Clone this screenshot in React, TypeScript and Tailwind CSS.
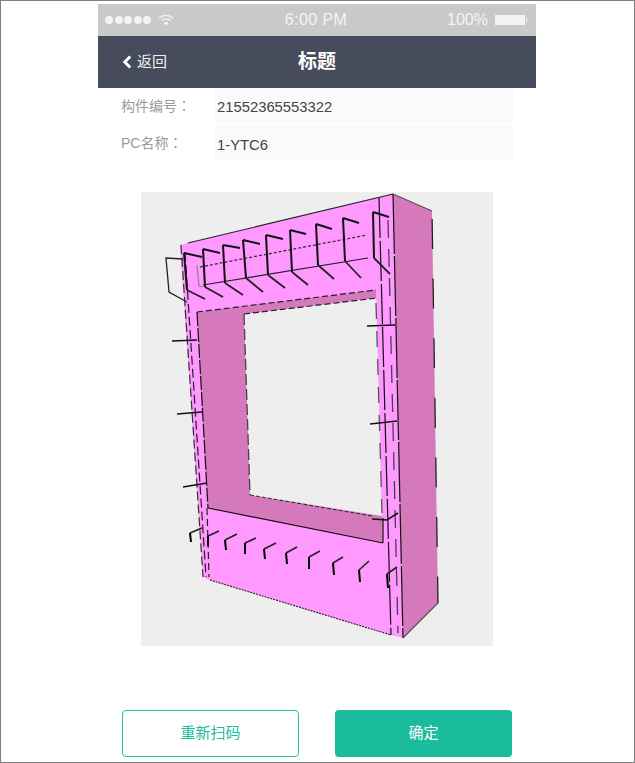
import React from "react";

const CJK = "font-['Liberation_Sans','Noto_Sans_CJK_SC',sans-serif]";

type Pt = [number, number];
const pl = (p: Pt[]) => p.map((q) => q.join(",")).join(" ");

// [tip, corner, bottom, foot]
const topHooks: Pt[][] = [
  [[202, 257], [184, 253], [187, 290], [205, 299]],
  [[220, 253], [203, 249], [205, 287], [223, 297]],
  [[240, 248], [223, 245], [225, 283], [243, 295]],
  [[260, 244], [243, 240], [246, 278], [263, 292]],
  [[283, 239], [266, 235], [268, 275], [285, 288]],
  [[306, 234], [290, 230], [292, 272], [308, 285]],
  [[332, 229], [316, 224], [318, 265], [334, 279]],
  [[359, 223], [343, 218], [345, 261], [361, 278]],
  [[389, 217], [373, 212], [374, 258], [390, 274]],
];

const smallHooks: Pt[][] = [
  [[219, 531], [208, 536], [208, 546]],
  [[237, 534], [225, 540], [226, 550]],
  [[256, 538], [245, 543], [245, 554]],
  [[276, 543], [264, 549], [265, 559]],
  [[297, 547], [286, 553], [287, 564]],
  [[320, 551], [309, 557], [309, 569]],
  [[343, 557], [333, 563], [334, 575]],
  [[369, 561], [359, 570], [360, 582]],
  [[397, 567], [387, 574], [388, 588]],
  [[202, 528], [190, 533], [191, 542]],
];

const stubs: Pt[][] = [
  [[172, 341], [197, 340]],
  [[177, 414], [202, 412]],
  [[183, 487], [207, 483]],
  [[367, 326], [395, 325]],
  [[370, 424], [397, 421]],
  [[372, 519], [387, 520], [398, 513]],
];

const PanelDrawing = () => (
  <svg viewBox="141 192 352 454" className="block h-[454px] w-[352px]" fill="none" strokeLinecap="butt">
    <polygon points="393,194 432,211 438,603 403,638" fill="#d678bc" />
    <polygon points="180,245 188,243 393,194 403,638 391,635 210,580 203,577" fill="#ff99ff" />
    <polygon points="197,312 376,290 383,543 208,508" fill="#d678bc" />
    <polygon points="244,314 377,298 382,516 250,495" fill="#eeeeee" />
    <polygon points="376,290 379,290 383,518 382,516" fill="#ff99ff" />

    {/* top beam */}
    <polyline points="188,243 393,194" stroke="#222" strokeWidth="1.2" />
    <polyline points="393,194 432,211" stroke="#555" strokeWidth="1.2" />
    <polyline points="203,285 368,258" stroke="#222" strokeWidth="1.1" />
    <polyline points="200,267 367,235" stroke="#333" strokeWidth="1.3" strokeDasharray="3 2" />
    <polyline points="197,265 199,286 203,287" stroke="#888" strokeWidth="1.2" />
    <polyline points="197,312 376,290" stroke="#222" strokeWidth="1.2" strokeDasharray="6 3" />
    <polyline points="244,314 377,298" stroke="#222" strokeWidth="1.2" strokeDasharray="6 3" />

    {/* left pillar */}
    <polyline points="181,245 203,577" stroke="#333" strokeWidth="1.2" strokeDasharray="9 4" />
    <polyline points="185,252 206,577" stroke="#222" strokeWidth="1.2" strokeDasharray="9 4" />
    <polyline points="197,312 208,508" stroke="#111" strokeWidth="1.2" strokeDasharray="14 2" />
    <polyline points="207,508 209,577" stroke="#222" strokeWidth="1.2" strokeDasharray="7 4" />
    <polyline points="244,314 250,495" stroke="#444" strokeWidth="1.3" strokeDasharray="11 4" />

    {/* hole bottom */}
    <polyline points="250,495 372,516" stroke="#333" strokeWidth="1.1" strokeDasharray="4 2" />
    <polyline points="208,508 383,543" stroke="#111" strokeWidth="1.2" />
    <polyline points="383,518 383,543" stroke="#111" strokeWidth="1.2" />
    <polyline points="210,580 391,635" stroke="#222" strokeWidth="1.1" strokeDasharray="2 1" />

    {/* right pillar */}
    <polyline points="379,198 391,635" stroke="#111" strokeWidth="1.2" strokeDasharray="40 3" />
    <polyline points="388,220 398,633" stroke="#444" strokeWidth="1.3" strokeDasharray="18 11" />
    <polyline points="393,194 403,638" stroke="#111" strokeWidth="1.2" strokeDasharray="60 2" />
    <polyline points="376,303 382,513" stroke="#555" strokeWidth="1.3" strokeDasharray="16 12" />
    <polyline points="432,211 438,603" stroke="#222" strokeWidth="1.3" strokeDasharray="30 29.6" strokeDashoffset="51.6" />
    <polyline points="403,638 438,603" stroke="#555" strokeWidth="1.1" />

    {/* far-left hook */}
    <polyline points="183,259 166,258 169,292 187,302" stroke="#222" strokeWidth="1.3" />

    {topHooks.map((h, i) => (
      <g key={i}>
        <polyline points={pl(h.slice(0, 2))} stroke="#111" strokeWidth="1.9" />
        <polyline points={pl(h.slice(1, 3))} stroke="#111" strokeWidth="2" />
        <polyline points={pl(h.slice(2))} stroke="#222" strokeWidth="1.8" />
      </g>
    ))}
    {smallHooks.map((h, i) => (
      <g key={i}>
        <polyline points={pl(h.slice(0, 2))} stroke="#222" strokeWidth="1.6" />
        <polyline points={pl(h.slice(1))} stroke="#000" strokeWidth="2" />
      </g>
    ))}
    {stubs.map((h, i) => (
      <polyline key={i} points={pl(h)} stroke="#111" strokeWidth="1.5" />
    ))}
  </svg>
);

const Row = ({ label, value, shift }: { label: string; value: string; shift: string }) => (
  <div className="flex h-[35px] pl-[23px] pr-[23px]">
    <div className={`w-[94px] text-[14px] leading-[34px] text-[#9a9a9a] ${CJK}`}>
      {label}
      <span className="font-['Noto_Sans_CJK_TC',sans-serif]">：</span>
    </div>
    <div className={`h-[35px] flex-1 bg-[#fafafa] pl-[2px] font-['Liberation_Sans',sans-serif] text-[14.8px] text-[#444444] ${shift}`}>
      {value}
    </div>
  </div>
);

export default function App() {
  return (
    <div className="h-[763px] w-[635px] border border-[#808080] bg-white">
      <div className="ml-[97px] w-[438px] pt-[3px]">
        {/* status bar */}
        <div className="flex h-[32px] items-center justify-between bg-[#c9c9c9] pl-[7px] pr-[9px] font-['Liberation_Sans',sans-serif] text-[16px] text-[#f4f4f4]">
          <div className="flex w-[130px] items-center gap-[1.5px]">
            {[0, 1, 2, 3, 4].map((i) => (
              <span key={i} className="h-[8px] w-[8px] rounded-full bg-[#f4f4f4]" />
            ))}
            <svg width="16" height="12" viewBox="0 0 16 12" fill="none" stroke="#f4f4f4" strokeWidth="1.3" className="ml-[5px]">
              <path d="M1 4.2 C5 0.4 11 0.4 15 4.2" />
              <path d="M3.4 6.6 C6 4.2 10 4.2 12.6 6.6" />
              <path d="M8 11.5 L5.6 8.9 C7 7.7 9 7.7 10.4 8.9 Z" fill="#f4f4f4" stroke="none" />
            </svg>
          </div>
          <span className="tracking-[0.4px]">6:00 PM</span>
          <div className="flex w-[130px] items-center justify-end">
            <span className="pr-[1px]">100%</span>
            <span className="ml-[6px] flex h-[10px] w-[30px] border border-[#f4f4f4] bg-[#f4f4f4]" />
            <span className="ml-[1px] h-[4px] w-[1px] bg-[#f4f4f4]" />
          </div>
        </div>
        {/* nav */}
        <div className="flex h-[52px] items-center bg-[#474c5c] text-white">
          <div className={`flex w-[200px] items-center pl-[24px] text-[15px] ${CJK}`}>
            <svg width="10" height="14" viewBox="0 0 10 14" fill="none" stroke="#ffffff" strokeWidth="3">
              <path d="M8.2 1.5 L2.8 7 L8.2 12.5" />
            </svg>
            <span className="ml-[5px] text-[#f0f0f0]">返回</span>
          </div>
          <div className={`text-[19px] font-bold ${CJK}`}>标题</div>
        </div>
        {/* form */}
        <div className="flex flex-col gap-[2px]">
          <Row label="构件编号" value="21552365553322" shift="pt-[8px]" />
          <Row label="PC名称" value="1-YTC6" shift="pt-[9px]" />
        </div>
        {/* model */}
        <div className="ml-[43px] mt-[32px] h-[454px] w-[352px] bg-[#eeeeee]">
          <PanelDrawing />
        </div>
        {/* buttons */}
        <div className={`ml-[24px] mt-[64px] flex gap-[36px] text-[15px] ${CJK}`}>
          <button className="h-[47px] w-[177px] rounded-[4px] border border-[#22c2a4] bg-white text-[#1abc9c]">重新扫码</button>
          <button className="h-[47px] w-[177px] rounded-[4px] bg-[#1abc9c] text-white">确定</button>
        </div>
      </div>
    </div>
  );
}
